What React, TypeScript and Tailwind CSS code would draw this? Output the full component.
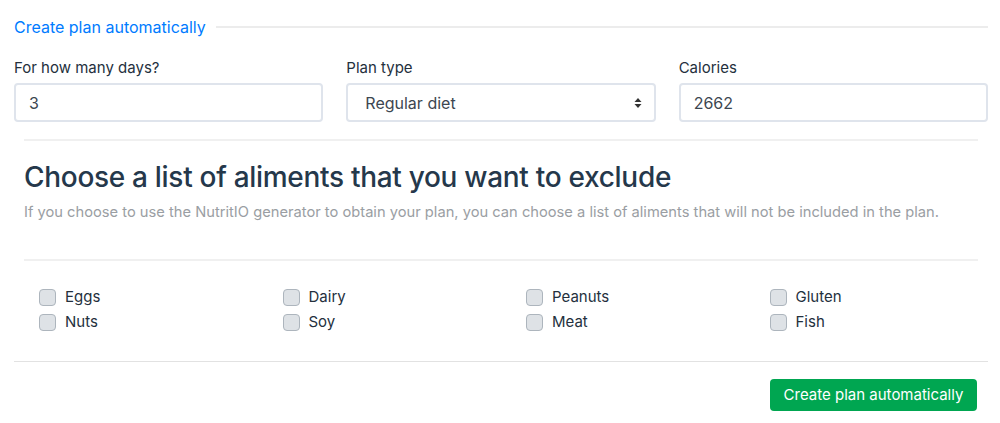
import React from "react";

const items = [
  ["Eggs", "Nuts"],
  ["Dairy", "Soy"],
  ["Peanuts", "Meat"],
  ["Gluten", "Fish"],
];

function Box() {
  return (
    <span className="inline-block w-[17px] h-[17px] rounded-[4px] bg-[#dee2e6] border border-[#adb5bd] shrink-0" />
  );
}

export default function App() {
  return (
    <div
      className="w-[1000px] h-[423px] bg-white overflow-hidden"
      style={{ fontFamily: "Inter, 'Noto Sans', sans-serif" }}
    >
      <div className="mx-[14px] w-[974px]">
        {/* legend */}
        <div className="flex items-center h-[22px] mt-[16px]">
          <span className="text-[#007bff] text-[16px] leading-[22px] whitespace-nowrap">Create plan automatically</span>
          <div className="flex-1 h-[2px] bg-[#ececec] ml-[10px] -mt-[1px]" />
        </div>

        {/* inputs */}
        <div className="grid grid-cols-3 gap-x-[23px] mt-[19px]">
          <div>
            <div className="text-[15px] leading-[22px] text-[#24303d]">For how many days?</div>
            <div className="mt-[4px] h-[39px] border-2 border-[#dfe4ec] rounded-[4px] flex items-center px-[13px] text-[16px] text-[#3c4650]">3</div>
          </div>
          <div>
            <div className="text-[15px] leading-[22px] text-[#24303d]">Plan type</div>
            <div className="mt-[4px] h-[39px] border-2 border-[#dfe4ec] rounded-[4px] flex items-center pl-[17px] pr-[12px] text-[16px] text-[#3c4650]">
              <span className="flex-1">Regular diet</span>
              <svg width="8" height="12" viewBox="0 0 8 12">
                <path d="M4 1 L7.5 5 H0.5 Z" fill="#333" />
                <path d="M4 11 L7.5 7 H0.5 Z" fill="#333" />
              </svg>
            </div>
          </div>
          <div>
            <div className="text-[15px] leading-[22px] text-[#24303d]">Calories</div>
            <div className="mt-[4px] h-[39px] border-2 border-[#dfe4ec] rounded-[4px] flex items-center px-[13px] text-[16px] text-[#3c4650]">2662</div>
          </div>
        </div>

        {/* section */}
        <div className="px-[10px]">
          <div className="h-[2px] bg-[#f0f0f0] mt-[17px]" />
          <h2 className="text-[28px] leading-[34px] font-medium text-[#25384b] mt-[19px] tracking-[-0.3px]">
            Choose a list of aliments that you want to exclude
          </h2>
          <p className="text-[14.7px] leading-[20px] text-[#9a9ea3] mt-[8px]">
            If you choose to use the NutritIO generator to obtain your plan, you can choose a list of aliments that will not be included in the plan.
          </p>
          <div className="h-[2px] bg-[#f0f0f0] mt-[37px]" />
        </div>

        {/* checkboxes */}
        <div className="grid grid-cols-4 mt-[26px]">
          {items.map((col, i) => (
            <div key={i} className="pl-[25px] flex flex-col gap-[5px]">
              {col.map((t) => (
                <label key={t} className="flex items-center gap-[9px] h-[20px] text-[15px] text-[#24303d]">
                  <Box />
                  <span>{t}</span>
                </label>
              ))}
            </div>
          ))}
        </div>

        <div className="h-[1px] bg-[#e2e2e2] mt-[29px]" />

        <div className="flex justify-end pr-[11px] mt-[17px]">
          <button className="h-[32px] w-[207px] rounded-[4px] bg-[#00a651] text-white text-[15px]">
            Create plan automatically
          </button>
        </div>
      </div>
    </div>
  );
}
